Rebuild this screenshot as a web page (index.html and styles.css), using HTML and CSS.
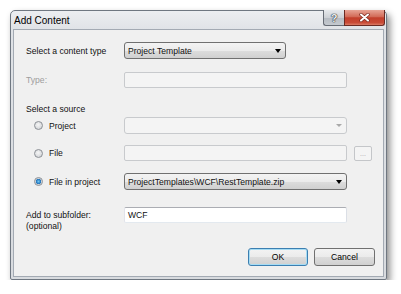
FILE: index.html
```html
<!DOCTYPE html>
<html lang="en">
<head>
    <meta charset="UTF-8">
    <title>Add Content</title>
    <link rel="stylesheet" href="styles.css">
</head>
<body>
    <div class="window">
        <div class="titlebar">
            <span class="title">Add Content</span>
            <div class="caption-buttons">
                <span class="cap-btn help">?</span>
                <span class="cap-btn close">
                    <svg width="11" height="9" viewBox="0 0 11 9">
                        <path d="M2 1.5 L9 7.5 M9 1.5 L2 7.5" stroke="#7a2a20" stroke-width="3.4" stroke-linecap="round"/>
                        <path d="M2 1.5 L9 7.5 M9 1.5 L2 7.5" stroke="#fff" stroke-width="2" stroke-linecap="round"/>
                    </svg>
                </span>
            </div>
        </div>

        <div class="client">
            <div class="row">
                <span class="field-label">Select a content type</span>
                <div class="combo combo-short">Project Template<span class="arrow"></span></div>
            </div>

            <div class="row row-type">
                <span class="field-label disabled-text">Type:</span>
                <div class="textbox"></div>
            </div>

            <div class="source-heading">Select a source</div>

            <div class="row row-project">
                <span class="field-label radio-label"><span class="radio"></span>Project</span>
                <div class="combo combo-disabled"><span class="arrow"></span></div>
            </div>

            <div class="row row-file">
                <span class="field-label radio-label"><span class="radio"></span>File</span>
                <div class="textbox"></div>
                <span class="dots">...</span>
            </div>

            <div class="row row-fip">
                <span class="field-label radio-label"><span class="radio checked"></span>File in project</span>
                <div class="combo">ProjectTemplates\WCF\RestTemplate.zip<span class="arrow"></span></div>
            </div>

            <div class="row row-folder">
                <span class="field-label folder-label">Add to subfolder:<br>(optional)</span>
                <div class="textbox active">WCF</div>
            </div>

            <div class="row buttons">
                <span class="btn btn-default">OK</span>
                <span class="btn btn-cancel">Cancel</span>
            </div>
        </div>
    </div>
</body>
</html>
```

FILE: styles.css
```css
/* Page */
body {
    margin: 0;
    background: #fff;
    font-family: "Liberation Sans", Arial, sans-serif;
    font-size: 8.6px;
    color: #111;
}

/* Window frame */
.window {
    box-sizing: border-box;
    width: 377px;
    margin: 10px 0 0 10px;
    padding: 0 2px 2px;
    border: 1px solid #6f7781;
    border-radius: 5px 5px 2px 2px;
    background: linear-gradient(#eceef1, #dfe2e6 20px, #d8dbdf);
    box-shadow: 3px 4px 7px rgba(0, 0, 0, 0.45);
}

.titlebar {
    height: 18px;
    display: flex;
    align-items: flex-start;
    justify-content: space-between;
}

.title {
    font-size: 10px;
    line-height: 19px;
    padding-left: 1px;
    color: #000;
}

.caption-buttons {
    display: flex;
    margin-top: -1px;
    margin-right: -1px;
}

.cap-btn {
    box-sizing: border-box;
    height: 16px;
    display: flex;
    align-items: center;
    justify-content: center;
    border: 1px solid #666c75;
    border-top: none;
}

.help {
    width: 21px;
    border-right: none;
    border-radius: 0 0 0 3px;
    background: linear-gradient(#e6e9ec, #cdd1d6 50%, #b5bbc2 51%, #c4c9cf);
    font-weight: bold;
    font-size: 11px;
    color: #eef0f2;
    text-shadow: 0 0 1px #2b2f35, 0 0 1px #2b2f35, 0 0 1px #2b2f35;
}

.close {
    width: 41px;
    border-color: #6b2a22;
    border-radius: 0 0 3px 0;
    background: linear-gradient(#e7a495, #d26a57 45%, #c23f2b 52%, #c94b37 85%, #da7d67);
}

/* Client area */
.client {
    display: flex;
    flex-direction: column;
    padding: 12px 8px 10px 12px;
    border: 1px solid #a3aab3;
    background: #f0f0f0;
}

.row {
    display: flex;
    align-items: center;
}

.field-label {
    width: 98px;
    flex-shrink: 0;
}

.disabled-text {
    color: #9d9d9d;
}

.row-type { margin-top: 13px; }
.row-project { margin-top: 2px; }
.row-file { margin-top: 11px; }
.row-fip { margin-top: 12px; }

.source-heading {
    margin-top: 15px;
    line-height: 12px;
}

.row-folder {
    margin-top: 17px;
    align-items: flex-start;
}

.folder-label {
    padding-top: 3px;
    line-height: 11px;
}

/* Radio buttons */
.radio-label {
    display: flex;
    align-items: center;
}

.radio {
    box-sizing: border-box;
    width: 9px;
    height: 9px;
    margin: 0 6px 0 8px;
    border: 1px solid #8c9096;
    border-radius: 50%;
    background: radial-gradient(circle at 45% 40%, #f6f6f6, #c9ccd0);
}

.radio.checked {
    background: radial-gradient(circle, #6cc6f2 0, #2373bb 2.4px, #cfd3d8 3px, #fbfbfb 4.5px);
}

/* Inputs */
.textbox {
    box-sizing: border-box;
    width: 223px;
    height: 16px;
    padding: 0 3px;
    line-height: 14px;
    border: 1px solid #c8cacd;
    border-radius: 2px;
    background: #f4f4f4;
}

.textbox.active {
    background: #fff;
    border-color: #abadb3 #dbdfe6 #e3e9ef #e2e3ea;
}

.combo {
    box-sizing: border-box;
    width: 223px;
    height: 17px;
    display: flex;
    align-items: center;
    padding: 0 4px 0 3px;
    border: 1px solid #707070;
    border-radius: 3px;
    background: linear-gradient(#f3f3f3, #ebebeb 50%, #dddddd 51%, #d0d0d0);
}

.combo-short {
    width: 162px;
}

.combo .arrow {
    margin-left: auto;
    border-left: 3.5px solid transparent;
    border-right: 3.5px solid transparent;
    border-top: 4px solid #000;
}

.combo-disabled {
    border-color: #c8cacd;
    background: #f4f4f4;
}

.combo-disabled .arrow {
    border-left-width: 3px;
    border-right-width: 3px;
    border-top: 3px solid #a9a9a9;
}

.dots {
    box-sizing: border-box;
    width: 18px;
    height: 15px;
    margin-left: 7px;
    padding-top: 3px;
    text-align: center;
    font-size: 7px;
    color: #a6a6a6;
    border: 1px solid #c4c6c9;
    border-radius: 2px;
    background: #f4f4f4;
}

/* Dialog buttons */
.buttons {
    margin-top: 16px;
    justify-content: flex-end;
    gap: 6px;
}

.btn {
    box-sizing: border-box;
    height: 18px;
    display: flex;
    align-items: center;
    justify-content: center;
    border: 1px solid #707070;
    border-radius: 3px;
    background: linear-gradient(#f3f3f3, #ebebeb 50%, #dddddd 51%, #d0d0d0);
    color: #000;
}

.btn-default {
    width: 60px;
    border-color: #3c7fb1;
    box-shadow: inset 0 0 0 1px #a6dcf4;
}

.btn-cancel {
    width: 61px;
}
```
